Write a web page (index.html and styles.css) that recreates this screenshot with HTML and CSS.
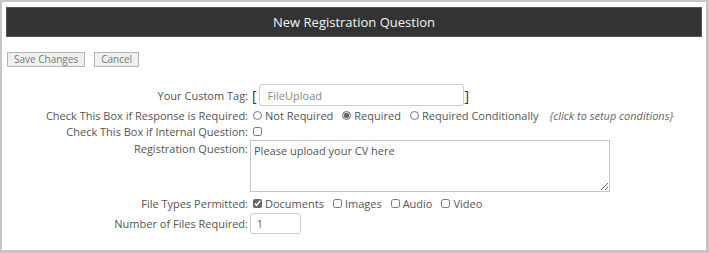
FILE: index.html
```html
<!DOCTYPE html>
<html lang="en">
<head>
    <meta charset="UTF-8">
    <title>New Registration Question</title>
    <link rel="stylesheet" href="styles.css">
</head>
<body>
    <div class="frame">
        <header class="title-bar">New Registration Question</header>

        <div class="actions">
            <button class="btn">Save Changes</button>
            <button class="btn">Cancel</button>
        </div>

        <!-- question form -->
        <div class="form">
            <label class="label">Your Custom Tag:</label>
            <div class="field">
                <span class="bracket">[</span>
                <input class="text-input tag-input" type="text" value="FileUpload">
                <span class="bracket bracket-close">]</span>
            </div>

            <label class="label">Check This Box if Response is Required:</label>
            <div class="field options">
                <label class="option"><input type="radio" name="req"> Not Required</label>
                <label class="option"><input type="radio" name="req" checked> Required</label>
                <label class="option"><input type="radio" name="req"> Required Conditionally</label>
                <span class="hint">{click to setup conditions}</span>
            </div>

            <label class="label">Check This Box if Internal Question:</label>
            <div class="field options">
                <input type="checkbox">
            </div>

            <label class="label label-top">Registration Question:</label>
            <div class="field">
                <textarea class="question">Please upload your CV here</textarea>
            </div>

            <label class="label">File Types Permitted:</label>
            <div class="field options">
                <label class="option"><input type="checkbox" checked> Documents</label>
                <label class="option"><input type="checkbox"> Images</label>
                <label class="option"><input type="checkbox"> Audio</label>
                <label class="option"><input type="checkbox"> Video</label>
            </div>

            <label class="label">Number of Files Required:</label>
            <div class="field">
                <input class="text-input count-input" type="text" value="1">
            </div>
        </div>
    </div>
</body>
</html>
```

FILE: styles.css
```css
html, body {
    margin: 0;
    padding: 0;
    background: #fff;
}
body {
    font-family: 'Open Sans', 'Liberation Sans', sans-serif;
    font-size: 11px;
    line-height: 13px;
    color: #555;
}
.frame {
    box-sizing: border-box;
    width: 709px;
    height: 253px;
    border: 2px solid #c6c6c6;
    border-right-width: 3px;
    border-bottom-width: 3px;
    padding: 5px 4px 0 4px;
}
.title-bar {
    background-color: #333;
    border: 1px solid #555;
    color: #f4f4f4;
    font-size: 13px;
    text-align: center;
    height: 28px;
    line-height: 28px;
}
.actions {
    display: flex;
    gap: 9px;
    margin-top: 15px;
    padding-left: 1px;
}
.btn {
    font-family: inherit;
    font-size: 10px;
    color: #777;
    background: #f0f0f0;
    border: 1px solid #b5b5b5;
    padding: 0 6px;
    height: 15px;
    line-height: 13px;
}
.form {
    display: grid;
    grid-template-columns: 242px 1fr;
    column-gap: 2px;
    row-gap: 3px;
    margin-top: 17px;
    align-items: center;
}
.label {
    text-align: right;
    white-space: nowrap;
}
.label-top {
    align-self: start;
    padding-top: 1px;
}
.field {
    display: flex;
    align-items: center;
}
.bracket {
    font-size: 14px;
    color: #333;
    margin: 0 2px 0 2px;
}
.bracket-close {
    margin-left: 1px;
}
.text-input {
    font-family: inherit;
    font-size: 11px;
    color: #888;
    border: 1px solid #ccc;
    border-radius: 3px;
    box-sizing: border-box;
    padding: 0 8px;
    outline: none;
}
.tag-input {
    width: 205px;
    height: 22px;
}
.count-input {
    width: 51px;
    height: 21px;
    color: #555;
    font-size: 10px;
    padding: 0 6px;
}
.options {
    gap: 9px;
    padding-left: 3px;
}
.option {
    display: flex;
    align-items: center;
    gap: 3px;
}
input[type="radio"], input[type="checkbox"] {
    margin: 0;
    width: 9px;
    height: 9px;
    accent-color: #666;
}
.hint {
    font-style: italic;
    color: #666;
    margin-left: 2px;
}
.question {
    font-family: inherit;
    font-size: 11px;
    color: #555;
    width: 360px;
    height: 52px;
    box-sizing: border-box;
    border: 1px solid #c8c8c8;
    padding: 2px 3px;
    margin: -1px 0 2px 0;
    resize: both;
}
```
